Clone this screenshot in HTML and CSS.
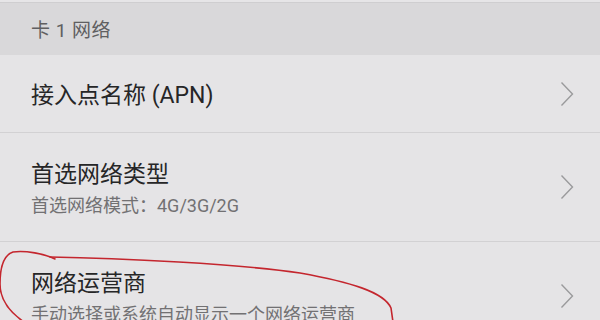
FILE: index.html
```html
<!DOCTYPE html>
<html lang="zh-CN">
<head>
<meta charset="utf-8">
<link rel="stylesheet" href="styles.css">
</head>
<body>
<div class="screen">
  <div class="topline"></div>
  <div class="section-header">卡 1 网络</div>
  <div class="row row-single">
    <div class="row-text">
      <div class="title">接入点名称 (APN)</div>
    </div>
    <svg class="chev" width="14" height="26" viewBox="0 0 14 26"><path d="M1.5 1.5 L12.5 13 L1.5 24.5" fill="none" stroke="#9a9a9c" stroke-width="1.4"/></svg>
  </div>
  <div class="row row-double">
    <div class="row-text">
      <div class="title">首选网络类型</div>
      <div class="subtitle">首选网络模式：4G/3G/2G</div>
    </div>
    <svg class="chev" width="14" height="26" viewBox="0 0 14 26"><path d="M1.5 1.5 L12.5 13 L1.5 24.5" fill="none" stroke="#9a9a9c" stroke-width="1.4"/></svg>
  </div>
  <div class="row row-double">
    <div class="row-text">
      <div class="title">网络运营商</div>
      <div class="subtitle">手动选择或系统自动显示一个网络运营商</div>
    </div>
    <svg class="chev" width="14" height="26" viewBox="0 0 14 26"><path d="M1.5 1.5 L12.5 13 L1.5 24.5" fill="none" stroke="#9a9a9c" stroke-width="1.4"/></svg>
  </div>
  <svg class="annotation" width="600" height="320" viewBox="0 0 600 320">
    <path d="M50 257 C 120 258 240 264 300 273 C 350 282 384 292 391 308 L 393 322" fill="none" stroke="#c4262e" stroke-width="1.6" stroke-linecap="round"/>
    <path d="M55 259 C 45 254 25 250 13 252 C 4 255 0 268 0 284 C 0 299 8 311 24 322" fill="none" stroke="#c4262e" stroke-width="1.6" stroke-linecap="round"/>
  </svg>
</div>
</body>
</html>
```

FILE: styles.css
```css
html, body {
  margin: 0;
  padding: 0;
}
body {
  width: 600px;
  height: 320px;
  overflow: hidden;
  background: #e5e4e6;
  font-family: Roboto, "Noto Sans CJK SC", sans-serif;
}
.screen {
  position: relative;
  width: 600px;
  height: 320px;
  overflow: hidden;
  background: #e5e4e6;
}
.topline {
  height: 2px;
  background: #e6e5e7;
  border-bottom: 1px solid #cfced0;
}
.section-header {
  height: 48px;
  padding-top: 4px;
  background: #d9d8da;
  color: #605f61;
  font-size: 19px;
  line-height: 48px;
  padding-left: 31px;
  letter-spacing: 0.5px;
}
.row {
  display: flex;
  align-items: center;
  padding: 0 26px 0 31px;
  border-bottom: 1px solid #d2d1d3;
  background: #e5e4e6;
}
.row-single {
  height: 77px;
}
.row-double {
  height: 108px;
}
.row-text {
  flex: 1;
  display: flex;
  flex-direction: column;
  gap: 4px;
  padding-top: 4px;
}
.title {
  font-size: 23px;
  line-height: 30px;
  color: #262627;
}
.subtitle {
  font-size: 18px;
  line-height: 24px;
  color: #727173;
}
.chev {
  flex: none;
  display: block;
}
.annotation {
  position: absolute;
  left: 0;
  top: 0;
  pointer-events: none;
}
```
